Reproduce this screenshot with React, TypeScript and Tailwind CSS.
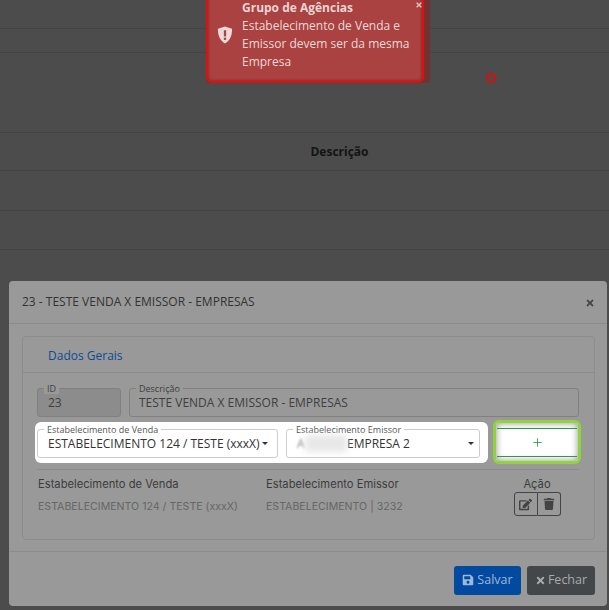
import { FaEdit, FaTrash, FaSave, FaTimes } from 'react-icons/fa'
import { Plus } from 'lucide-react'

const open = "font-['Open_Sans',sans-serif]"

function BgRow({ h, children }: { h: string; children?: React.ReactNode }) {
  return <div className={`${h} border-b border-[#444444] flex items-center justify-center`}>{children}</div>
}

function Legend({ label, w }: { label: string; w: string }) {
  return (
    <span className={`absolute left-[6px] top-[-5px] ${w} px-[3px] text-[9px] leading-[10px] whitespace-nowrap`}>{label}</span>
  )
}

export default function App() {
  return (
    <div className={`relative w-[609px] h-[610px] overflow-hidden bg-[#4c4c4c] ${open}`}>
      {/* Table behind the overlay */}
      <div className="flex flex-col">
        <BgRow h="h-[29px]" />
        <BgRow h="h-[24px]" />
        <BgRow h="h-[80px]" />
        <BgRow h="h-[38px]">
          <span className="ml-[70px] text-[12px] font-bold text-[#141414]">Descrição</span>
        </BgRow>
        <BgRow h="h-[40px]" />
        <BgRow h="h-[39px]" />
      </div>

      {/* Error toast */}
      <div className="absolute left-[206px] top-[-7px] w-[224px] h-[90px] rounded-[3px] bg-[#6f3331]">
        <div className="w-[218px] h-full pl-[34px] pr-[5px] pt-[4px] flex flex-col rounded-[6px] border-2 border-[#e80d0d] bg-[#a94240] text-[12px] leading-[18px] text-[#eed9d8] shadow-[inset_0_0_3px_rgba(90,0,0,0.6)]">
          <span className="font-bold text-[#e8d5d4]">Grupo de Agências</span>
          <span>Estabelecimento de Venda e Emissor devem ser da mesma Empresa</span>
        </div>
        <svg className="absolute left-[11px] top-[33px]" width="16" height="18" viewBox="0 0 16 19">
          <path d="M8 0.5 L15.5 3 C15.5 10 13.5 15.5 8 18.5 C2.5 15.5 0.5 10 0.5 3 Z" fill="#eed9d8" />
          <rect x="6.8" y="4.5" width="2.4" height="6.5" fill="#a94240" />
          <rect x="6.8" y="12.3" width="2.4" height="2.4" fill="#a94240" />
        </svg>
        <FaTimes className="absolute left-[209px] top-[8px] text-[#d9c0bf]" size={8} />
      </div>

      {/* Annotation ring */}
      <svg className="absolute left-[485px] top-[72px]" width="12" height="12" viewBox="0 0 12 12">
        <circle cx="6" cy="6" r="4" fill="none" stroke="#e00b0b" strokeWidth="2" />
      </svg>

      {/* Modal */}
      <div className="absolute left-[9px] top-[281px] w-[598px] h-[325px] rounded-[4px] bg-[#999999] flex flex-col text-[#333333]">
        <div className="h-[43px] shrink-0 border-b border-[#8c8c8c] pl-[13px] pr-[12px] flex items-center justify-between">
          <span className="text-[12px]">23 - TESTE VENDA X EMISSOR - EMPRESAS</span>
          <FaTimes className="mt-[2px] text-[#444444]" size={10} />
        </div>

        <div className="h-[228px] shrink-0 pt-[12px] px-[13px] border-b border-[#8c8c8c]">
          <div className="h-[204px] w-[573px] rounded-[4px] border border-[#8c8c8c] flex flex-col">
            <div className="h-[36px] shrink-0 border-b border-[#8c8c8c] pl-[25px] pt-[3px] flex items-center">
              <span className="text-[12px] text-[#0c4b94]">Dados Gerais</span>
            </div>

            <div className="flex-1 pl-[14px] pr-[15px] pt-[15px] flex flex-col">
              <div className="flex gap-[8px] text-[#3f3f3f]">
                <div className="relative w-[84px] h-[29px] rounded-[3px] border border-[#808080] bg-[#8c8c8c] pl-[10px] pt-[4px] text-[12px] leading-[19px]">
                  <Legend label="ID" w="bg-[#999999]" />
                  23
                </div>
                <div className="relative w-[450px] h-[29px] rounded-[3px] border border-[#808080] pl-[9px] pt-[4px] text-[12px] leading-[19px]">
                  <Legend label="Descrição" w="bg-[#999999]" />
                  TESTE VENDA X EMISSOR - EMPRESAS
                </div>
              </div>

              <div className="relative">
                {/* White highlight behind the two selects */}
                <div className="mt-[5px] ml-[-2px] w-[453px] h-[41px] rounded-[6px] bg-white px-[2px] pt-[7px] flex gap-[8px] text-[#333333]">
                  <div className="relative w-[241px] h-[29px] rounded-[3px] border border-[#cccccc] pl-[10px] pr-[9px] pt-[4px] text-[12px] leading-[19px] flex items-start justify-between whitespace-nowrap">
                    <Legend label="Estabelecimento de Venda" w="bg-white text-[#555555]" />
                    ESTABELECIMENTO 124 / TESTE (xxxX)
                    <span className="mt-[8px] border-x-[3px] border-t-[3px] border-x-transparent border-t-[#333333]" />
                  </div>
                  <div className="relative w-[194px] h-[29px] rounded-[3px] border border-[#cccccc] pl-[10px] pr-[5px] pt-[4px] text-[12px] leading-[19px] flex items-start justify-between whitespace-nowrap">
                    <Legend label="Estabelecimento Emissor" w="bg-white text-[#555555]" />
                    <span className="flex items-center">
                      <span className="w-[8px] text-[#888888] blur-[1px]">A</span>
                      <span className="w-[42px] h-[17px] bg-[#e8e8e8] blur-[3px]" />
                      <span>EMPRESA 2</span>
                    </span>
                    <span className="mt-[8px] border-x-[3px] border-t-[3px] border-x-transparent border-t-[#333333]" />
                  </div>
                </div>

                {/* Add button with green highlight */}
                <div className="absolute left-[456px] top-[3px] w-[88px] h-[44px] rounded-[6px] border-[3px] border-[#8fd33e] bg-white flex flex-col justify-center shadow-[inset_0_0_7px_rgba(0,0,0,0.45)]">
                  <div className="mx-[1px] h-[29px] border-y border-[#2d9a44] flex items-center justify-center">
                    <Plus className="text-[#2d9a44]" size={13} strokeWidth={1.6} />
                  </div>
                </div>
              </div>

              <div className="mt-[6px] pl-[1px] border-t border-[#8c8c8c] font-['Inter',sans-serif]">
                <div className="grid grid-cols-[228px_232px_1fr] pt-[7px] text-[11.2px] leading-[14px] text-[#3c3c3c]">
                  <span>Estabelecimento de Venda</span>
                  <span>Estabelecimento Emissor</span>
                  <span className="text-center pr-[3px]">Ação</span>
                </div>
                <div className="grid grid-cols-[228px_232px_1fr] text-[10.6px] leading-[14px] text-[#666666]">
                  <span className="pt-[9px] whitespace-nowrap">ESTABELECIMENTO 124 / TESTE (xxxX)</span>
                  <span className="pt-[9px] whitespace-nowrap">ESTABELECIMENTO | 3232</span>
                  <div className="flex justify-center pr-[3px] pt-[1px]">
                    <span className="w-[24px] h-[24px] rounded-l-[3px] border border-[#444444] flex items-center justify-center">
                      <FaEdit className="text-[#444444]" size={13} />
                    </span>
                    <span className="w-[23px] h-[24px] rounded-r-[3px] border border-l-0 border-[#444444] flex items-center justify-center">
                      <FaTrash className="text-[#444444]" size={12} />
                    </span>
                  </div>
                </div>
              </div>
            </div>
          </div>
        </div>

        <div className="flex-1 pr-[12px] pt-[2px] flex items-center justify-end gap-[6px] text-[12.5px]">
          <button className="w-[67px] h-[29px] rounded-[3px] bg-[#014a9f] text-[#9db8d8] flex items-center justify-center gap-[3px]">
            <FaSave size={12} />
            Salvar
          </button>
          <button className="w-[68px] h-[29px] rounded-[3px] bg-[#43474a] text-[#a9abac] flex items-center justify-center gap-[2px]">
            <FaTimes size={11} />
            Fechar
          </button>
        </div>
      </div>
    </div>
  )
}
